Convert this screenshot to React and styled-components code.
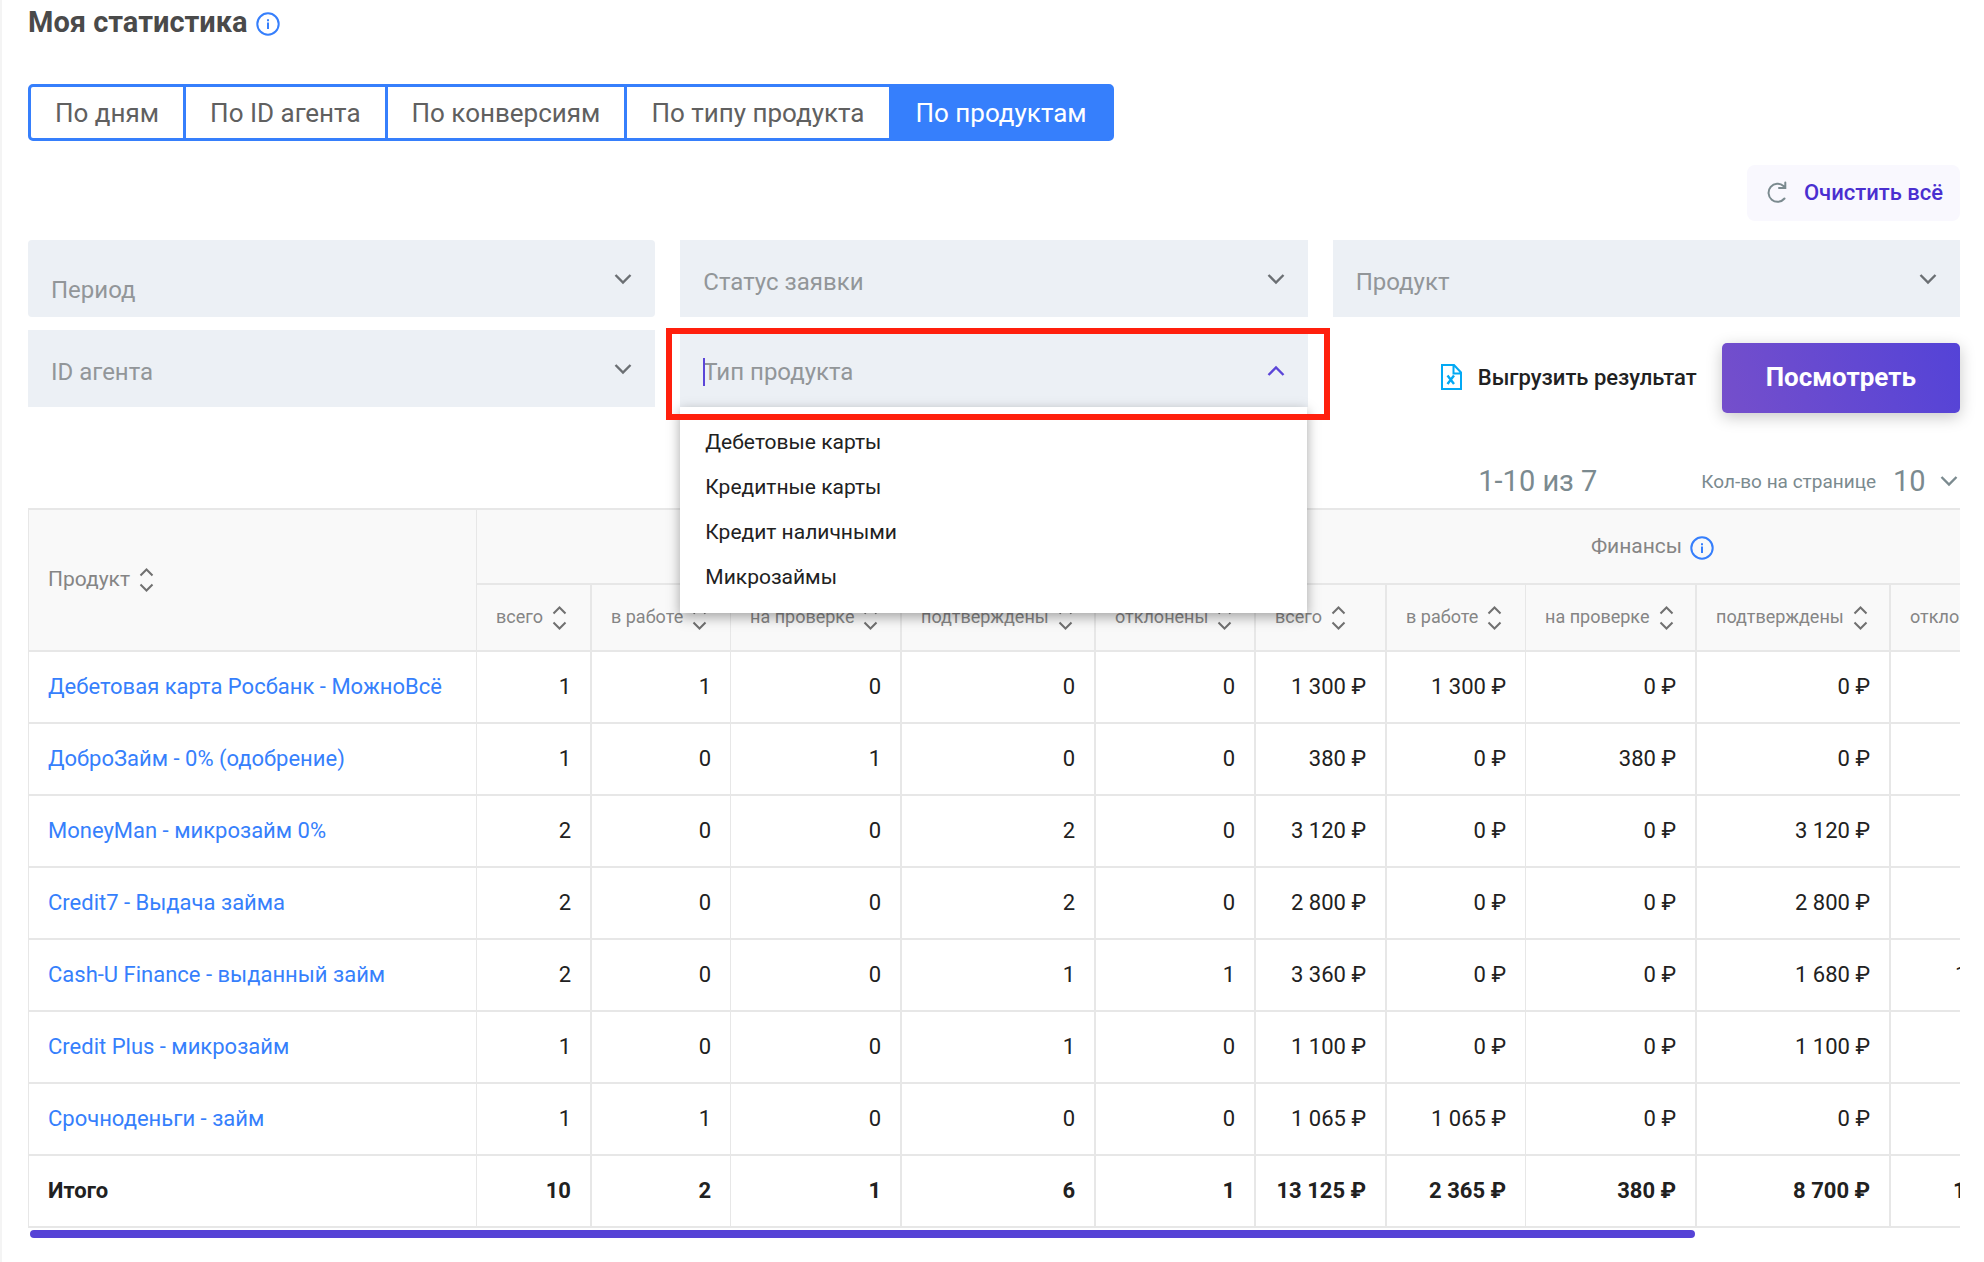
import React from 'react';
import styled, { createGlobalStyle } from 'styled-components';

const GlobalStyle = createGlobalStyle`
    * {
        box-sizing: border-box;
    }

    body {
        margin: 0;
        background: #fff;
        color: #212121;
        font-family: Roboto, "Liberation Sans", sans-serif;
        font-size: 22px;
    }

    button, input, select {
        font-family: inherit;
    }
`;

const Page = styled.main`
    min-height: 100vh;
    padding: 4px 24px 16px 26px;
    border-left: 2px solid #f4f4f4;
`;

const TitleRow = styled.div`
    display: flex;
    align-items: center;
    gap: 8px;
    height: 36px;
`;

const Title = styled.h1`
    margin: 0;
    color: #4a4a4a;
    font-size: 29px;
    font-weight: 700;
    line-height: 36px;
`;

const InfoButton = styled.button`
    display: inline-flex;
    padding: 4px 0 0;
    border: 0;
    background: none;
    color: #367ffc;
`;

const Tabs = styled.nav`
    display: flex;
    width: fit-content;
    margin-top: 44px;
    border: 3px solid #367ffc;
    border-radius: 5px;
    background: #367ffc;
    gap: 3px;
    overflow: hidden;
`;

const Tab = styled.button`
    height: 51px;
    padding: 0 24px;
    border: 0;
    background: ${({ $active }) => ($active ? '#367ffc' : '#fff')};
    color: ${({ $active }) => ($active ? '#fff' : '#606060')};
    font-size: 26px;
`;

const ClearRow = styled.div`
    display: flex;
    justify-content: flex-end;
    margin: 24px 0 19px;
`;

const ClearButton = styled.button`
    display: flex;
    align-items: center;
    gap: 17px;
    height: 56px;
    padding: 0 17px 2px 20px;
    border: 0;
    border-radius: 8px;
    background: #f9f8fe;
    color: #4a2fd0;
    font-size: 22px;
    font-weight: 500;
`;

const Filters = styled.form`
    display: grid;
    grid-template-columns: repeat(3, 1fr);
    gap: 13px 25px;
`;

const FieldBox = styled.div`
    position: relative;
    display: flex;
    align-items: center;
    height: 77px;
    padding: 0 23px;
    border-radius: ${({ $rounded }) => ($rounded ? '4px' : '0')};
    background: #ecf0f5;
    color: ${({ $open }) => ($open ? '#5b45d8' : '#6b6f73')};
`;

const FieldInput = styled.input`
    flex: 1;
    min-width: 0;
    height: 77px;
    padding: ${({ $low }) => ($low ? '22px 0 0' : '6px 0 0')};
    border: 0;
    outline: 0;
    background: none;
    font-size: 24px;

    &::placeholder {
        color: #929699;
        opacity: 1;
    }
`;

const Caret = styled.span`
    position: absolute;
    left: 23px;
    top: 28px;
    width: 2px;
    height: 28px;
    background: #5b45d8;
`;

const Highlight = styled.div`
    position: absolute;
    inset: -2px -22px -13px -14px;
    border: 6px solid #ff1f0d;
    pointer-events: none;
    z-index: 3;
`;

const Menu = styled.ul`
    position: absolute;
    top: 100%;
    left: 0;
    right: 1px;
    margin: 0;
    padding: 13px 0;
    background: #fff;
    box-shadow: 0 4px 12px rgba(0, 0, 0, 0.35);
    list-style: none;
    z-index: 2;
`;

const MenuItem = styled.li`
    padding: 0 25px;
    color: #212121;
    font-size: 21px;
    line-height: 45px;
`;

const Actions = styled.div`
    display: flex;
    align-items: flex-start;
    justify-content: flex-end;
    gap: 25px;
    padding-top: 13px;
`;

const ExportButton = styled.button`
    display: flex;
    align-items: center;
    gap: 16px;
    height: 70px;
    padding: 0 0 2px;
    border: 0;
    background: none;
    color: #212121;
    font-size: 22px;
    font-weight: 500;
    white-space: nowrap;
`;

const SubmitButton = styled.button`
    height: 70px;
    padding: 0 44px 2px;
    border: 0;
    border-radius: 5px;
    background: linear-gradient(70deg, #754fcb, #5443d7);
    box-shadow: 0 4px 16px rgba(0, 0, 0, 0.22);
    color: #fff;
    font-size: 26px;
    font-weight: 700;
`;

const Pager = styled.div`
    display: flex;
    align-items: center;
    justify-content: flex-end;
    height: 40px;
    margin: 48px 0 7px;
    color: #7b8a8f;
    font-size: 29px;
`;

const PageSizeLabel = styled.label`
    margin: 0 17px 0 104px;
    font-size: 19px;
`;

const PageSize = styled.select`
    padding: 0;
    border: 0;
    appearance: none;
    background: none;
    color: inherit;
    font-size: 29px;
`;

const PagerChevron = styled.span`
    display: flex;
    margin: 0 2px 0 14px;
`;

const TableScroll = styled.div`
    overflow-x: auto;
    scrollbar-width: none;
`;

const Table = styled.table`
    width: 2021px;
    table-layout: fixed;
    border-collapse: separate;
    border-spacing: 0;
    border-top: 2px solid #e7e7e7;
`;

const Th = styled.th`
    height: ${({ $height }) => $height}px;
    padding: 0 19px 2px;
    border-left: ${({ $thin }) => ($thin ? 1 : 2)}px solid #e7e7e7;
    border-bottom: 2px solid #e7e7e7;
    background: #f9f9f9;
    color: #858585;
    font-size: ${({ $size }) => $size}px;
    font-weight: 400;
    white-space: nowrap;
`;

const HeadLabel = styled.div`
    display: flex;
    align-items: center;
    justify-content: ${({ $center }) => ($center ? 'center' : 'flex-start')};
    gap: ${({ $center }) => ($center ? 8 : 9)}px;
`;

const SortButton = styled.button`
    display: flex;
    padding: 2px 0 0;
    border: 0;
    background: none;
    color: #707070;
`;

const Td = styled.td`
    height: 72px;
    padding: 0 19px 2px;
    border-left: ${({ $thin }) => ($thin ? 1 : 2)}px solid #e7e7e7;
    border-bottom: 2px solid #e7e7e7;
    font-size: 22px;
    font-weight: ${({ $total }) => ($total ? 700 : 400)};
    text-align: ${({ $name }) => ($name ? 'left' : 'right')};
    white-space: nowrap;
`;

const ProductLink = styled.a`
    color: #367ffc;
    text-decoration: none;
`;

const ScrollTrack = styled.div`
    margin: 2px 0 0 2px;
    height: 8px;
`;

const ScrollThumb = styled.div`
    height: 8px;
    border-radius: 4px;
    background: #5643d6;
`;

const Info = () => (
    <svg width="24" height="24" viewBox="0 0 24 24" fill="none" stroke="currentColor" strokeWidth="2">
        <circle cx="12" cy="12" r="10.7" />
        <path d="M12 10.500v6.500M12 7.200v2" />
    </svg>
);

const Chevron = ({ up }) => (
    <svg width="18" height="16" viewBox="0 0 18 16" fill="none" stroke="currentColor" strokeWidth="2.400">
        <path d={up ? 'M1.500 14L9 6.500l7.500 7.500' : 'M1.500 4L9 11.500 16.500 4'} />
    </svg>
);

const SortIcon = () => (
    <svg width="15" height="24" viewBox="0 0 15 24" fill="none" stroke="currentColor" strokeWidth="2">
        <path d="M1.500 7.500l6-6 6 6M1.500 16.500l6 6 6-6" />
    </svg>
);

const Refresh = () => (
    <svg width="20" height="22" viewBox="0 0 20 22" fill="none" stroke="#7b8a8f" strokeWidth="2" strokeLinecap="round">
        <path d="M17.500 17.500A9 9 0 1 1 16.500 5l1.700 2M18.300 1.500V7H12" />
    </svg>
);

const ExcelFile = () => (
    <svg width="21" height="26" viewBox="0 0 21 26" fill="none" stroke="#03a9f4" strokeWidth="2">
        <path d="M1 1h12l7 7.500V25H1zM12.500 1v8.500H20" />
        <path d="M6.500 11.500l6.500 8.500M13 11.500L6.500 20" strokeWidth="2.400" />
    </svg>
);

const tabs = ['По дням', 'По ID агента', 'По конверсиям', 'По типу продукта', 'По продуктам'];
const productTypes = ['Дебетовые карты', 'Кредитные карты', 'Кредит наличными', 'Микрозаймы'];
const statuses = ['всего', 'в работе', 'на проверке', 'подтверждены', 'отклонены'];
const columnWidths = [448, 114, 140, 170, 194, 160, 131, 140, 170, 194, 160];

const rows = [
    ['Дебетовая карта Росбанк - МожноВсё', '1', '1', '0', '0', '0', '1 300 ₽', '1 300 ₽', '0 ₽', '0 ₽', '0 ₽'],
    ['ДоброЗайм - 0% (одобрение)', '1', '0', '1', '0', '0', '380 ₽', '0 ₽', '380 ₽', '0 ₽', '0 ₽'],
    ['MoneyMan - микрозайм 0%', '2', '0', '0', '2', '0', '3 120 ₽', '0 ₽', '0 ₽', '3 120 ₽', '0 ₽'],
    ['Credit7 - Выдача займа', '2', '0', '0', '2', '0', '2 800 ₽', '0 ₽', '0 ₽', '2 800 ₽', '0 ₽'],
    ['Cash-U Finance - выданный займ', '2', '0', '0', '1', '1', '3 360 ₽', '0 ₽', '0 ₽', '1 680 ₽', '1 680 ₽'],
    ['Credit Plus - микрозайм', '1', '0', '0', '1', '0', '1 100 ₽', '0 ₽', '0 ₽', '1 100 ₽', '0 ₽'],
    ['Срочноденьги - займ', '1', '1', '0', '0', '0', '1 065 ₽', '1 065 ₽', '0 ₽', '0 ₽', '0 ₽'],
];
const total = ['Итого', '10', '2', '1', '6', '1', '13 125 ₽', '2 365 ₽', '380 ₽', '8 700 ₽', '1 680 ₽'];

// columns whose left rule is one pixel wide
const isThin = (index) => [0, 1, 3, 8].includes(index);

function Field({ label, low, rounded, open, children }) {
    return (
        <FieldBox $rounded={rounded} $open={open}>
            <FieldInput aria-label={label} placeholder={label} $low={low} />
            <Chevron up={open} />
            {children}
        </FieldBox>
    );
}

function Sortable({ label }) {
    return (
        <HeadLabel>
            {label}
            <SortButton type="button" aria-label={label}>
                <SortIcon />
            </SortButton>
        </HeadLabel>
    );
}

function StatsTable() {
    return (
        <TableScroll>
            <Table>
                <colgroup>
                    {columnWidths.map((width, ind) => (
                        <col key={ind} width={width} />
                    ))}
                </colgroup>
                <thead>
                    <tr>
                        <Th rowSpan={2} $height={142} $size={21} $thin>
                            <Sortable label="Продукт" />
                        </Th>
                        <Th colSpan={5} $height={75} $size={21} $thin />
                        <Th colSpan={5} $height={75} $size={21}>
                            <HeadLabel $center>
                                Финансы
                                <InfoButton type="button">
                                    <Info />
                                </InfoButton>
                            </HeadLabel>
                        </Th>
                    </tr>
                    <tr>
                        {[...statuses, ...statuses].map((status, ind) => (
                            <Th key={ind} $height={67} $size={18} $thin={isThin(ind + 1)}>
                                <Sortable label={status} />
                            </Th>
                        ))}
                    </tr>
                </thead>
                <tbody>
                    {rows.map(([name, ...values]) => (
                        <tr key={name}>
                            <Td $name $thin>
                                <ProductLink href="#">{name}</ProductLink>
                            </Td>
                            {values.map((value, ind) => (
                                <Td key={ind} $thin={isThin(ind + 1)}>{value}</Td>
                            ))}
                        </tr>
                    ))}
                    <tr>
                        {total.map((value, ind) => (
                            <Td key={ind} $total $name={ind === 0} $thin={isThin(ind)}>{value}</Td>
                        ))}
                    </tr>
                </tbody>
            </Table>
        </TableScroll>
    );
}

function App() {
    return (
        <Page>
            <GlobalStyle />
            <TitleRow>
                <Title>Моя статистика</Title>
                <InfoButton type="button">
                    <Info />
                </InfoButton>
            </TitleRow>
            <Tabs>
                {tabs.map((tab, ind) => (
                    <Tab key={tab} type="button" $active={ind === tabs.length - 1}>{tab}</Tab>
                ))}
            </Tabs>
            <ClearRow>
                <ClearButton type="button">
                    <Refresh />
                    Очистить всё
                </ClearButton>
            </ClearRow>
            <Filters>
                <Field label="Период" low rounded />
                <Field label="Статус заявки" />
                <Field label="Продукт" />
                <Field label="ID агента" />
                <Field label="Тип продукта" open>
                    <Caret />
                    <Menu>
                        {productTypes.map((type) => (
                            <MenuItem key={type}>{type}</MenuItem>
                        ))}
                    </Menu>
                    <Highlight />
                </Field>
                <Actions>
                    <ExportButton type="button">
                        <ExcelFile />
                        Выгрузить результат
                    </ExportButton>
                    <SubmitButton type="button">Посмотреть</SubmitButton>
                </Actions>
            </Filters>
            <Pager>
                <span>1-10 из 7</span>
                <PageSizeLabel htmlFor="page-size">Кол-во на странице</PageSizeLabel>
                <PageSize id="page-size" defaultValue="10">
                    <option value="10">10</option>
                </PageSize>
                <PagerChevron>
                    <Chevron />
                </PagerChevron>
            </Pager>
            <StatsTable />
            <ScrollTrack>
                <ScrollThumb style={{ width: `${(1665 / 1930) * 100}%` }} />
            </ScrollTrack>
        </Page>
    );
}

export default App;
